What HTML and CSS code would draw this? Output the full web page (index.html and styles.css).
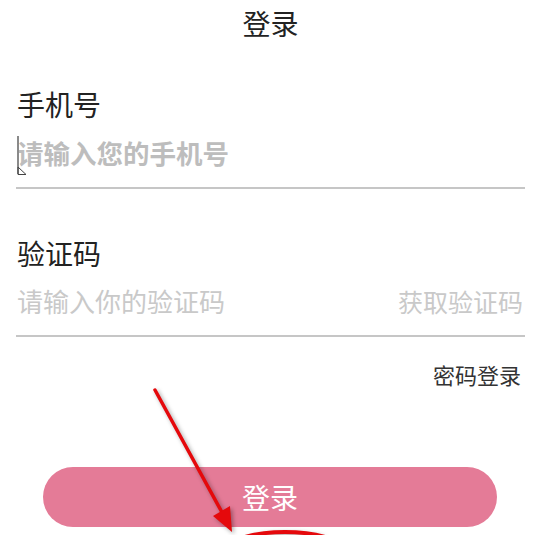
FILE: index.html
```html
<!DOCTYPE html>
<html lang="zh">
<head>
<meta charset="utf-8">
<title>登录</title>
<link rel="stylesheet" href="styles.css">
</head>
<body>
<div class="page">
  <header class="title">登录</header>
  <section class="field field-phone">
    <div class="label">手机号</div>
    <div class="input-row">
      <svg class="caret" width="12" height="40" viewBox="0 0 12 40">
        <rect x="0" y="0" width="2" height="38" fill="#8a8a8a"/>
        <path d="M1 31 L9 38.5 L1 38.5 Z" fill="none" stroke="#444" stroke-width="1"/>
      </svg>
      <span class="placeholder placeholder-focus">请输入您的手机号</span>
    </div>
  </section>
  <section class="field field-code">
    <div class="label">验证码</div>
    <div class="input-row">
      <span class="placeholder">请输入你的验证码</span>
      <span class="get-code">获取验证码</span>
    </div>
  </section>
  <div class="switch">密码登录</div>
  <div class="btn-wrap">
    <button class="btn-login">登录</button>
  </div>
</div>
<svg class="annotation" width="550" height="535" viewBox="0 0 550 535">
  <line x1="155" y1="390" x2="224" y2="516" stroke="#e5090c" stroke-width="3.5" stroke-linecap="round"/>
  <polygon points="232,532 213,516 230,506" fill="#e5090c"/>
  <ellipse cx="285" cy="560" rx="70" ry="28" fill="none" stroke="#e5090c" stroke-width="4"/>
</svg>
</body>
</html>
```
FILE: styles.css
```css
html, body {
  margin: 0;
  padding: 0;
  background: #ffffff;
  overflow: hidden;
}
body {
  width: 550px;
  height: 535px;
  position: relative;
  font-family: "Noto Sans CJK SC", "Noto Sans", sans-serif;
}
.page {
  padding: 9px 25px 0 16px;
}
.title {
  font-size: 28px;
  line-height: 28px;
  color: #222;
  text-align: center;
}
.field {
  display: flex;
  flex-direction: column;
}
.field-phone {
  margin-top: 53px;
}
.field-code {
  margin-top: 50px;
}
.label {
  font-size: 28px;
  line-height: 28px;
  color: #222;
  padding-left: 1px;
}
.input-row {
  position: relative;
  display: flex;
  justify-content: space-between;
  align-items: center;
  margin-top: 22px;
  padding-bottom: 21px;
  border-bottom: 2px solid #c6c6c6;
}
.field-code .input-row {
  margin-top: 21px;
}
.placeholder {
  font-size: 26px;
  line-height: 26px;
  color: #c9c9c9;
  padding-left: 1px;
}
.placeholder-focus {
  font-size: 26.5px;
  color: #bdbdbd;
  font-weight: 700;
}
.get-code {
  font-size: 25px;
  line-height: 26px;
  color: #c9c9c9;
  padding-right: 2px;
}
.caret {
  position: absolute;
  left: 1px;
  top: -4px;
}
.switch {
  margin-top: 26px;
  font-size: 22px;
  line-height: 22px;
  color: #333;
  text-align: right;
  padding-right: 4px;
}
.btn-wrap {
  margin: 82px 28px 0 27px;
}
.btn-login {
  display: block;
  width: 100%;
  height: 60px;
  border: none;
  border-radius: 30px;
  background: #e47b97;
  color: #ffffff;
  font-family: "Noto Sans CJK SC", "Noto Sans", sans-serif;
  font-size: 28px;
  line-height: 28px;
  padding: 0;
}
.annotation {
  position: absolute;
  left: 0;
  top: 0;
  pointer-events: none;
  filter: drop-shadow(2px 2px 2px rgba(0, 0, 0, 0.35));
}
```
